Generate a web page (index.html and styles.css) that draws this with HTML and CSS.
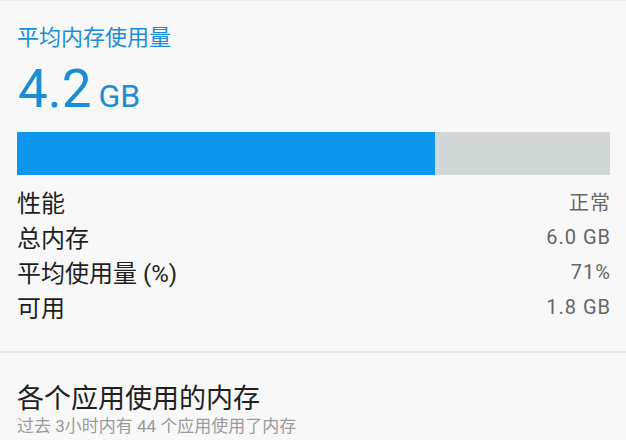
FILE: index.html
```html
<!DOCTYPE html>
<html lang="zh-CN">
<head>
<meta charset="utf-8">
<title>内存</title>
<link rel="stylesheet" href="styles.css">
</head>
<body>
<main class="page">
  <section class="summary">
    <h1 class="summary-title">平均内存使用量</h1>
    <div class="usage"><span class="usage-num">4.2</span><span class="usage-unit">GB</span></div>
    <div class="meter"><div class="meter-fill" style="width:70.5%"></div></div>
    <ul class="stats">
      <li class="stat"><span class="stat-label">性能</span><span class="stat-value">正常</span></li>
      <li class="stat"><span class="stat-label">总内存</span><span class="stat-value">6.0 GB</span></li>
      <li class="stat"><span class="stat-label">平均使用量 (%)</span><span class="stat-value">71%</span></li>
      <li class="stat"><span class="stat-label">可用</span><span class="stat-value">1.8 GB</span></li>
    </ul>
  </section>
  <section class="apps">
    <h2 class="apps-title">各个应用使用的内存</h2>
    <p class="apps-sub">过去 3小时内有 44 个应用使用了内存</p>
  </section>
</main>
</body>
</html>
```

FILE: styles.css
```css
* { box-sizing: border-box; margin: 0; padding: 0; }

html, body {
  background: #f8f8f8;
  width: 626px;
  height: 440px;
  overflow: hidden;
}

body {
  font-family: Roboto, "Noto Sans CJK SC", sans-serif;
  color: #222;
  border-top: 1px solid #ececec;
}

/* summary block: heading, big figure, meter and stats, closed by a rule */
.summary {
  padding: 22px 32px 27px 17px;
  margin-right: -16px;
  border-bottom: 2px solid #e9e9e9;
}

.summary-title {
  font-size: 22px;
  font-weight: 400;
  line-height: 30px;
  color: #1b8dd6;
}

.usage {
  display: flex;
  align-items: baseline;
  gap: 7px;
  color: #1b8dd6;
  height: 56px;
  margin-top: 6px;
}

.usage-num {
  font-size: 53px;
  line-height: 60px;
  padding-left: 1px;
}

.usage-unit {
  font-size: 32px;
}

.meter {
  height: 43px;
  background: #d1d6d9;
  margin-top: 17px;
}

.meter-fill {
  height: 100%;
  background: #0d96ee;
}

.stats {
  list-style: none;
  margin-top: 9px;
}

.stat {
  display: flex;
  justify-content: space-between;
  align-items: center;
  height: 35px;
}

.stat-label {
  font-size: 24px;
  color: #1e1e1e;
}

.stat-value {
  font-size: 20px;
  letter-spacing: 1px;
  margin-right: -1px;
  color: #666;
}

/* per-app section */
.apps {
  padding: 31px 16px 0 17px;
}

.apps-title {
  font-size: 27px;
  font-weight: 400;
  line-height: 30px;
  color: #202020;
}

.apps-sub {
  font-size: 17px;
  line-height: 24px;
  color: #9a9a9a;
}
```
